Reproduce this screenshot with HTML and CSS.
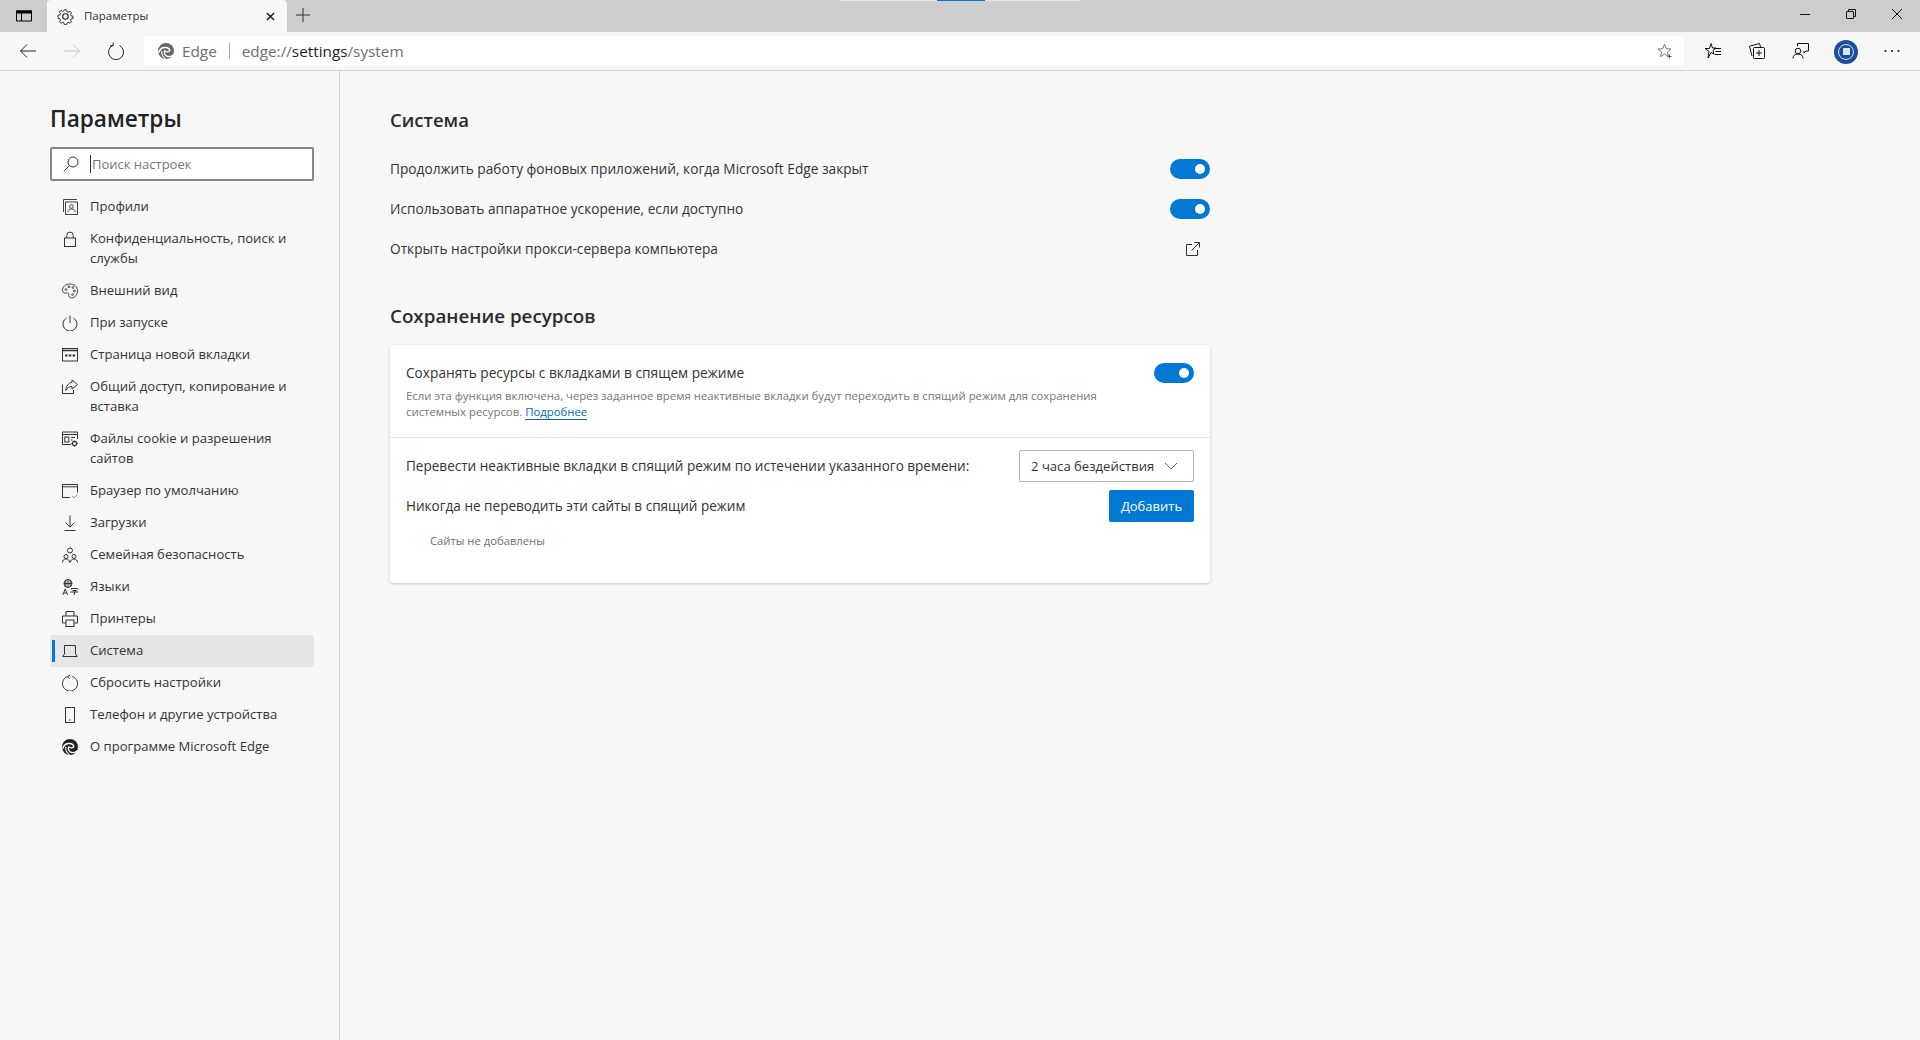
FILE: index.html
```html
<!DOCTYPE html>
<html lang="ru">
<head>
<meta charset="utf-8">
<title>Параметры</title>
<link rel="stylesheet" href="styles.css">
</head>
<body>
<svg class="defs" width="0" height="0">
  <defs>
    <symbol id="edge" viewBox="0 0 16 16">
      <circle cx="8" cy="8" r="8" fill="currentColor"/>
      <path d="M0.600 9.800C2 5.800 5.300 4.200 8 4.600c2.400.4 3.800 2 3.600 3.700" fill="none" stroke="#fff" stroke-width="1.500"/>
      <path d="M11.600 8.200c-1.300.9-3.800.8-4.800-.3-1.200 2 .2 5 2.800 5.600 2.300.5 4.500-.3 6-2" fill="none" stroke="#fff" stroke-width="1.300"/>
      <path d="M3.800 7.800c-.5 3 1 6 3.700 7.800" fill="none" stroke="#fff" stroke-width="1.100"/>
    </symbol>
  </defs>
</svg>

<div class="progress"><span class="progress-fill"></span></div>

<header class="tabstrip">
  <div class="tab-actions">
    <svg class="ic16" viewBox="0 0 16 16"><path d="M.5 3h15v10H.5zM.5 5h15M5.500 5v8" fill="none" stroke="#000"/><rect x="0" y="2.500" width="16" height="2.500" fill="#000"/></svg>
  </div>
  <div class="tab">
    <svg class="ic16 tab-gear" viewBox="0 0 16 16" fill="none" stroke="#222"><path d="M6.800 1h2.400l.4 2 1.300.6 1.800-1 1.600 1.700-1.100 1.700.6 1.300 2 .4v2.400l-2 .4-.6 1.300 1.100 1.700-1.600 1.600-1.800-1-1.300.6-.4 2H6.800l-.4-2-1.300-.6-1.800 1-1.600-1.600 1.100-1.700-.6-1.300-2-.4V6.700l2-.4.6-1.300-1.100-1.700 1.600-1.700 1.800 1 1.300-.6z" transform="translate(.8 .8) scale(.9)"/><circle cx="8" cy="8" r="2.600"/></svg>
    <span class="tab-title">Параметры</span>
    <svg class="tab-close" viewBox="0 0 10 10"><path d="M1 1l8 8M9 1L1 9" stroke="#111" stroke-width="1.500"/></svg>
  </div>
  <svg class="tab-new" viewBox="0 0 14 14"><path d="M7 0v14M0 7h14" stroke="#333" stroke-width="1"/></svg>
  <div class="win-controls">
    <svg class="ic-win" viewBox="0 0 10 10"><path d="M0 5.500h10" stroke="#111"/></svg>
    <svg class="ic-win" viewBox="0 0 10 10" fill="none" stroke="#111"><rect x=".5" y="2.500" width="7" height="7" rx=".5"/><path d="M2.500 2.500V.5h7v7H7.500"/></svg>
    <svg class="ic-win" viewBox="0 0 10 10"><path d="M0 0l10 10M10 0L0 10" stroke="#111"/></svg>
  </div>
</header>

<nav class="toolbar">
  <button class="tool-btn"><svg class="ic18" viewBox="0 0 18 18" fill="none" stroke="#222"><path d="M17 9H1.500M8 2.500L1.500 9 8 15.500"/></svg></button>
  <button class="tool-btn"><svg class="ic18" viewBox="0 0 18 18" fill="none" stroke="#c4c4c4"><path d="M1 9h15.500M10 2.500L16.500 9 10 15.500"/></svg></button>
  <button class="tool-btn"><svg class="ic18" viewBox="0 0 18 18" fill="none" stroke="#222"><path d="M6 2.800a7.500 7.500 0 1 0 6.500.2M6.200 0v3.200H2.900" transform="translate(0 .5)"/></svg></button>
  <div class="address">
    <svg class="addr-logo"><use href="#edge"/></svg>
    <span class="addr-name">Edge</span>
    <span class="addr-sep"></span>
    <span class="addr-url">edge://<b>settings</b>/system</span>
    <svg class="addr-star" viewBox="0 0 16 16" fill="none" stroke="#777"><path d="M7.500 1.200l1.800 4.500 4.700.3-3.600 3 1.200 4.600-4.100-2.600-4 2.600 1.200-4.600L1 6l4.700-.3z"/><path d="M12.500 11.500v4M10.500 13.500h4" stroke="#555"/></svg>
  </div>
  <div class="tool-right">
    <svg class="ic18" viewBox="0 0 18 18" fill="none" stroke="#111"><path d="M7 1.500L8.500 6H12L9 8.500 9.800 12 7 10.500 4 16l1-6.500L1 6.500h4.500z"/><path d="M10 6.500h7M11.500 9.500h5.500M10.500 12.500h6.500"/></svg>
    <svg class="ic18" viewBox="0 0 18 18" fill="none" stroke="#111"><path d="M4 14L1.500 4.200 11.500 1.500l1 3.500"/><rect x="5.500" y="5.500" width="11" height="11" rx="1"/><path d="M11 8v6M8 11h6"/></svg>
    <svg class="ic18" viewBox="0 0 18 18" fill="none" stroke="#111"><path d="M5.500 4V1.500h11v7.500H14l-2 2v-2"/><circle cx="6" cy="9" r="2.800"/><path d="M1 16.500c0-3 2-4.500 5-4.500s5 1.500 5 4.500"/></svg>
    <span class="avatar"><span class="avatar-ring"><span class="avatar-win"></span></span></span>
    <svg class="ic18" viewBox="0 0 18 18" fill="#222"><circle cx="2.500" cy="9" r="1.100"/><circle cx="9" cy="9" r="1.100"/><circle cx="15.500" cy="9" r="1.100"/></svg>
  </div>
</nav>

<div class="page">
  <aside class="sidebar">
    <h1 class="side-title">Параметры</h1>
    <div class="search">
      <svg class="ic16" viewBox="0 0 16 16" fill="none" stroke="#333"><circle cx="10" cy="6" r="5"/><path d="M6.400 9.600L.8 15.200"/></svg>
      <span class="caret"></span>
      <span class="search-ph">Поиск настроек</span>
    </div>
    <ul class="nav">
      <li class="nav-item"><svg class="nav-ic" viewBox="0 0 16 16" fill="none" stroke="#444"><path d="M1.500 13V.5h13.500"/><rect x="3.500" y="3" width="12" height="12.500"/><circle cx="9.500" cy="7.500" r="1.800"/><path d="M6 13c0-2.500 1.500-3 3.500-3s3.500.5 3.500 3"/></svg><span>Профили</span></li>
      <li class="nav-item"><svg class="nav-ic" viewBox="0 0 16 16" fill="none" stroke="#333"><rect x="2.500" y="7" width="11" height="8.500"/><path d="M4.800 7V4.300a3.200 3.200 0 0 1 6.400 0V7"/></svg><span>Конфиденциальность, поиск и службы</span></li>
      <li class="nav-item"><svg class="nav-ic" viewBox="0 0 16 16" fill="none" stroke="#444"><path d="M8 1C3.500 1 .5 3.800.5 7.200c0 2.600 2.500 3.400 4 2.800 1.500-.5 2.500 0 2.200 1.500-.3 1.700.8 3.500 3 3.500 3 0 5.800-3.300 5.800-7.200C15.500 3.500 12 1 8 1z"/><circle cx="4" cy="6.500" r=".9"/><circle cx="7" cy="3.800" r=".9"/><circle cx="11" cy="4.500" r=".9"/><circle cx="12.500" cy="8" r=".9"/><circle cx="10.500" cy="11.500" r=".9"/></svg><span>Внешний вид</span></li>
      <li class="nav-item"><svg class="nav-ic" viewBox="0 0 16 16" fill="none" stroke="#333"><path d="M4.500 3a7 7 0 1 0 7 0M8 .5V8"/></svg><span>При запуске</span></li>
      <li class="nav-item"><svg class="nav-ic" viewBox="0 0 16 16" fill="none" stroke="#333"><rect x=".5" y="1.500" width="15" height="12.500"/><path d="M.5 3.500h15" stroke-width="1.500"/><path d="M3 8.500h2.500M6.800 8.500h2.500M10.600 8.500h2.500" stroke-width="2"/></svg><span>Страница новой вкладки</span></li>
      <li class="nav-item"><svg class="nav-ic" viewBox="0 0 16 16" fill="none" stroke="#333"><path d="M.5 5.500v9h11V11"/><path d="M10 1l5.500 4.500L10 10V7.500C7 7.500 5 9 3.800 11.500 4 7 6.500 3.800 10 3.500z"/></svg><span>Общий доступ, копирование и вставка</span></li>
      <li class="nav-item"><svg class="nav-ic" viewBox="0 0 16 16" fill="none" stroke="#333"><path d="M9 13.500H.5V1h15v7"/><path d="M.5 3.500h15"/><rect x="2.800" y="6" width="4" height="5"/><path d="M9 6.500h4M9 9h1.500"/><circle cx="12.500" cy="12.500" r="2.200" stroke-width="1.200"/><path d="M12.500 9.500v1M12.500 14.500v1.200M9.500 12.500h1M14.500 12.500h1.200"/></svg><span>Файлы cookie и разрешения сайтов</span></li>
      <li class="nav-item"><svg class="nav-ic" viewBox="0 0 16 16" fill="none" stroke="#333"><path d="M8 14.500H.5V1.500h15v8M.5 3.800h15"/><path d="M10 13l2 2 3.500-3.500" stroke="#999"/></svg><span>Браузер по умолчанию</span></li>
      <li class="nav-item"><svg class="nav-ic" viewBox="0 0 16 16" fill="none" stroke="#333"><path d="M8 .5v11M3.500 7.500L8 12l4.500-4.500M2.500 15.500h11"/></svg><span>Загрузки</span></li>
      <li class="nav-item"><svg class="nav-ic" viewBox="0 0 16 16" fill="none" stroke="#333"><circle cx="8" cy="3.500" r="2.500"/><circle cx="4" cy="9.500" r="2"/><circle cx="12" cy="9.500" r="2"/><path d="M.5 15.500c0-2.200 1.300-3.500 3.500-3.500 2.200 0 3.500 1.300 3.500 3.500M8.500 15.500c0-2.200 1.300-3.500 3.500-3.500s3.500 1.300 3.500 3.500"/></svg><span>Семейная безопасность</span></li>
      <li class="nav-item"><svg class="nav-ic" viewBox="0 0 16 16" fill="none" stroke="#333"><circle cx="6" cy="4.500" r="4"/><path d="M2 4.500h8M6 .5v8M3.800 1.500v6M8.200 1.500v6"/><path d="M.8 16l2.400-6 2.400 6M1.600 14h3.200" /><path d="M9 9.500h6.500M9.500 9.500v1M15.500 9.500v1M10.500 11.500h4l-2 1.500v2.500l-1 .5M8.500 13h7.500"/></svg><span>Языки</span></li>
      <li class="nav-item"><svg class="nav-ic" viewBox="0 0 16 16" fill="none" stroke="#333"><path d="M4 5V.5h8V5M4 12H.5V5h15v7H12"/><rect x="4" y="9" width="8" height="6.500"/></svg><span>Принтеры</span></li>
      <li class="nav-item nav-active"><svg class="nav-ic" viewBox="0 0 16 16" fill="none" stroke="#333"><path d="M2.500 11V2.500h11V11M1 13.500h14"/><path d="M2.500 11L.5 13.500M13.500 11l2 2.500"/></svg><span>Система</span></li>
      <li class="nav-item"><svg class="nav-ic" viewBox="0 0 16 16" fill="none" stroke="#333"><path d="M5.500 1.500a7.500 7.500 0 1 0 5 0M8 .3L5.500 1.500 7.500 3.800"/></svg><span>Сбросить настройки</span></li>
      <li class="nav-item"><svg class="nav-ic" viewBox="0 0 16 16" fill="none" stroke="#333"><rect x="3.500" y=".5" width="9" height="15"/><path d="M7 13h1.500" stroke-width="1.200"/></svg><span>Телефон и другие устройства</span></li>
      <li class="nav-item"><svg class="nav-ic nav-edge"><use href="#edge"/></svg><span>О программе Microsoft Edge</span></li>
    </ul>
  </aside>

  <main class="content">
    <section class="section">
      <h2 class="sec-title">Система</h2>
      <div class="row"><span>Продолжить работу фоновых приложений, когда Microsoft Edge закрыт</span><span class="toggle"></span></div>
      <div class="row"><span>Использовать аппаратное ускорение, если доступно</span><span class="toggle"></span></div>
      <div class="row"><span>Открыть настройки прокси-сервера компьютера</span>
        <svg class="ext" viewBox="0 0 14 14" fill="none" stroke="#333"><path d="M6 2.500H.5v11h11V8"/><path d="M5.500 8.500L13 1M8.500.5h5v5"/></svg>
      </div>
    </section>

    <section class="section sec-res">
      <h2 class="sec-title2">Сохранение ресурсов</h2>
      <div class="card">
        <div class="card-top">
          <div class="card-head"><span>Сохранять ресурсы с вкладками в спящем режиме</span><span class="toggle"></span></div>
          <p class="card-desc">Если эта функция включена, через заданное время неактивные вкладки будут переходить в спящий режим для сохранения системных ресурсов. <a class="link">Подробнее</a></p>
        </div>
        <div class="card-bottom">
          <div class="card-row"><span>Перевести неактивные вкладки в спящий режим по истечении указанного времени:</span>
            <div class="select"><span>2 часа бездействия</span><svg class="chev" viewBox="0 0 14 8" fill="none" stroke="#666"><path d="M1 1l6 6 6-6"/></svg></div>
          </div>
          <div class="card-row card-row2"><span>Никогда не переводить эти сайты в спящий режим</span><button class="add">Добавить</button></div>
          <p class="empty">Сайты не добавлены</p>
        </div>
      </div>
    </section>
  </main>
</div>
</body>
</html>
```
FILE: styles.css
```css
* { box-sizing: border-box; }
html, body { margin: 0; height: 100%; }
body {
  width: 1920px; height: 1040px; overflow: hidden;
  font-family: "Open Sans", "Noto Sans", "Liberation Sans", sans-serif;
  font-size: 13.100px; line-height: 20px; color: #2b2b2b;
  background: #f7f7f7; display: flex; flex-direction: column; position: relative;
}
.defs { position: absolute; }
h1, h2, p, ul { margin: 0; padding: 0; }
ul { list-style: none; }
.ic16 { width: 16px; height: 16px; flex: none; }
.ic18 { width: 18px; height: 18px; flex: none; }

.progress { position: absolute; left: 840px; top: 0; width: 241px; height: 1px; background: #e3e3e3; display: flex; justify-content: center; }
.progress-fill { width: 48px; background: #0078d4; }

.tabstrip { height: 32px; background: #cdcdcd; display: flex; align-items: flex-start; flex: none; }
.tab-actions { width: 47px; height: 32px; display: flex; align-items: center; justify-content: center; }
.tab { width: 240px; height: 32px; background: #f7f7f7; border-radius: 4px 4px 0 0; display: flex; align-items: center; padding-left: 10px; }
.tab-gear { width: 17px; height: 17px; }
.tab-title { margin-left: 10px; font-size: 11.500px; flex: 1; color: #333; }
.tab-close { width: 9px; height: 9px; margin-right: 12px; margin-top: 1px; }
.tab-new { width: 14px; height: 14px; margin: 8px 0 0 9px; }
.win-controls { margin-left: auto; display: flex; gap: 36px; padding: 9px 18px 0 0; }
.ic-win { width: 10px; height: 10px; }

.toolbar { height: 39px; background: #f7f7f7; border-bottom: 1px solid #d2d2d2; display: flex; align-items: flex-start; flex: none; padding: 4px 0 0 19px; }
.tool-btn { width: 18px; height: 30px; padding: 0; margin-right: 26px; border: 0; background: none; display: flex; align-items: center; justify-content: center; }
.toolbar .tool-btn:nth-child(3) { margin-right: 19px; }
.address { width: 1540px; height: 30px; background: #fff; border-radius: 4px; display: flex; align-items: center; padding-left: 14px; font-size: 15.300px; color: #6e6e6e; }
.addr-logo { width: 16px; height: 16px; color: #666; flex: none; }
.addr-name { margin-left: 8px; }
.addr-sep { width: 1px; height: 16px; background: #aaa; margin: 0 12px; }
.addr-url b { font-weight: 400; color: #222; }
.addr-star { width: 16px; height: 16px; margin-left: auto; margin-right: 11px; }
.tool-right { display: flex; align-items: center; height: 30px; margin-left: 20px; gap: 26px; }
.avatar { width: 24px; height: 24px; border-radius: 50%; background: #1b4f9c; display: flex; align-items: center; justify-content: center; margin: 1px -1px 0 -2px; }
.avatar-ring { width: 16px; height: 16px; border-radius: 50%; border: 1.500px solid #dbe6f5; display: flex; align-items: center; justify-content: center; }
.avatar-win { width: 7px; height: 7px; background: #dbe6f5; }

.page { flex: 1; display: flex; min-height: 0; }
.sidebar { width: 340px; flex: none; border-right: 1px solid #d2d2d2; padding: 31px 0 0 50px; }
.side-title { font-size: 22.600px; line-height: 33px; font-weight: 600; color: #222; }
.search { width: 264px; height: 34px; margin-top: 12px; background: #fff; border: 2px solid #858585; border-radius: 2px; display: flex; align-items: center; padding-left: 11px; }
.caret { width: 1px; height: 18px; background: #333; margin-left: 11px; }
.search-ph { color: #767676; margin-left: 1px; font-size: 13px; }
.nav { margin-top: 10px; width: 264px; }
.nav-item { display: flex; padding: 5px 10px 7px 40px; position: relative; color: #333; }
.nav-ic { position: absolute; left: 12px; top: 8px; width: 16px; height: 16px; }
.nav-edge { color: #222; }
.nav-active { background: #e6e6e6; border-radius: 2px; }
.nav-active::before { content: ""; position: absolute; left: 2px; top: 5px; bottom: 5px; width: 3px; background: #0078d4; }

.content { flex: 1; padding: 35px 0 0 50px; }
.section { width: 820px; }
.sec-title { font-size: 18.500px; line-height: 28px; font-weight: 600; color: #2b2b2b; margin-bottom: 15px; }
.sec-title2 { font-size: 18.800px; line-height: 28px; font-weight: 600; color: #2b2b2b; margin-bottom: 15px; }
.row { height: 40px; display: flex; align-items: center; justify-content: space-between; font-weight: 500; font-size: 13.700px; color: #333; }
.sec-res { margin-top: 33px; }
.toggle { width: 40px; height: 20px; border-radius: 10px; background: #0078d4; display: flex; align-items: center; justify-content: flex-end; padding-right: 5px; flex: none; }
.toggle::after { content: ""; width: 10px; height: 10px; border-radius: 50%; background: #fff; }
.ext { width: 14px; height: 14px; margin-right: 10px; }

.card { height: 238px; background: #fff; border-radius: 4px; box-shadow: 0 1px 3px rgba(0,0,0,.2); }
.card-top { height: 93px; padding: 18px 16px 0; border-bottom: 1px solid #e3e3e3; }
.card-head { display: flex; justify-content: space-between; font-weight: 500; font-size: 13.700px; color: #333; }
.card-desc { font-size: 11.360px; line-height: 16px; color: #767676; margin-top: 5px; width: 730px; }
.link { color: #0067b8; border-bottom: 1px solid #0067b8; }
.card-bottom { padding: 12px 16px 0; }
.card-row { display: flex; justify-content: space-between; align-items: center; font-weight: 500; font-size: 13.550px; color: #333; }
.card-row2 { margin-top: 8px; }
.select { width: 175px; height: 32px; border: 1px solid #b5b5b5; border-radius: 2px; display: flex; align-items: center; justify-content: space-between; padding: 0 15px 0 11px; font-weight: 400; font-size: 13.100px; }
.chev { width: 14px; height: 8px; }
.add { width: 85px; height: 32px; background: #0078d4; color: #fff; border: 0; border-radius: 2px; font: inherit; font-size: 13px; font-weight: 400; padding: 0; }
.empty { font-size: 11.260px; color: #6e6e6e; margin: 9px 0 0 24px; }
```
